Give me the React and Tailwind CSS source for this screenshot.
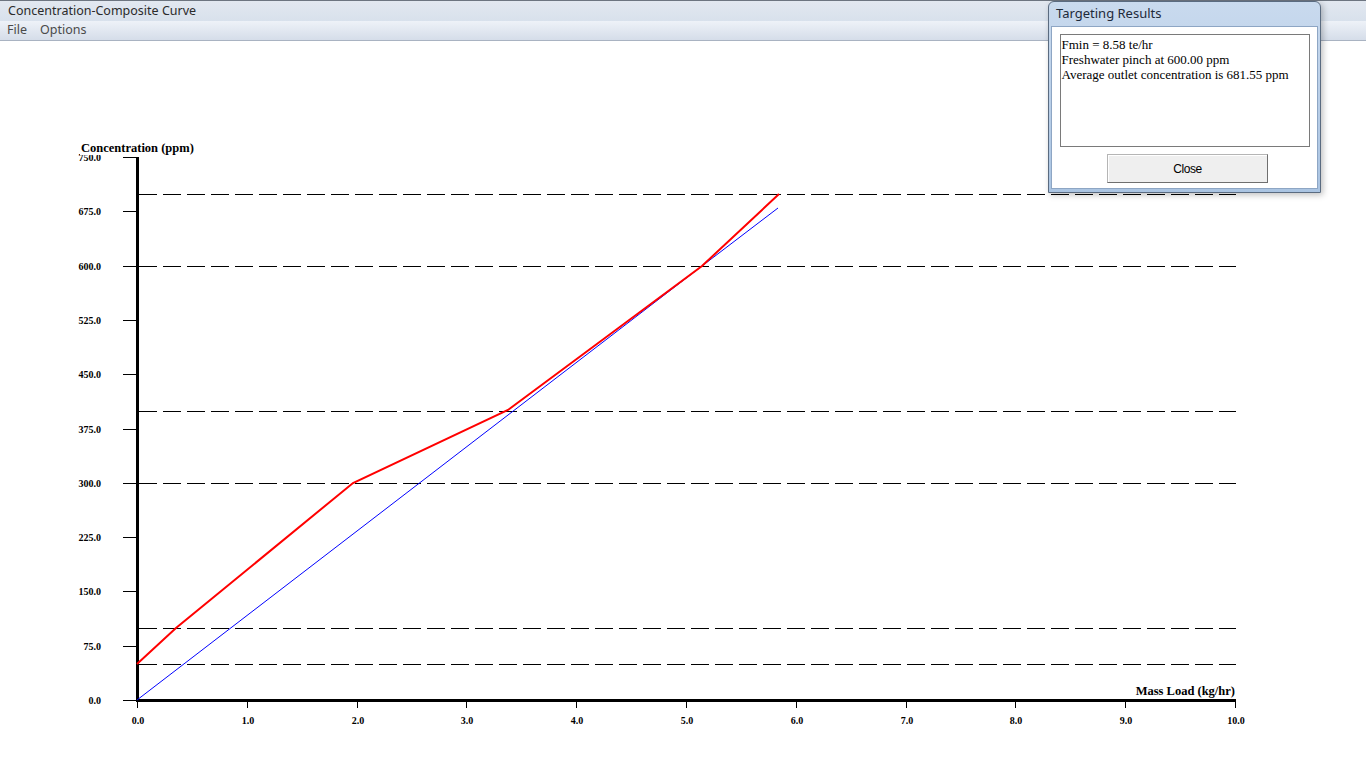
import React from "react";

const X = (v) => 137 + v * 109.8;
const Y = (c) => 700 - c * 0.724;

const yTicks = [0, 75, 150, 225, 300, 375, 450, 525, 600, 675, 750];
const xTicks = [0, 1, 2, 3, 4, 5, 6, 7, 8, 9, 10];
// dashed guide lines (pixel rows)
const guides = [194, 266, 411, 483, 628, 664];

const red = [
  [137, 664],
  [176, 628],
  [353, 483],
  [508, 410],
  [702, 266],
  [779, 194],
];
const blue = [
  [137, 700],
  [702, 266],
  [778, 208],
];

const pts = (arr) => arr.map((p) => p.join(",")).join(" ");

function Chart() {
  return (
    <svg width="1366" height="727" viewBox="0 41 1366 727" className="block font-['Liberation_Serif',serif] font-bold">
      {guides.map((y) => (
        <line key={y} x1="139" x2="1236" y1={y + 0.5} y2={y + 0.5} stroke="#000" strokeWidth="1" strokeDasharray="18 6" shapeRendering="crispEdges" />
      ))}

      {/* axes */}
      <line x1="137.5" x2="137.5" y1="157" y2="701" stroke="#000" strokeWidth="3" shapeRendering="crispEdges" />
      <line x1="136" x2="1236" y1="700" y2="700" stroke="#000" strokeWidth="3" shapeRendering="crispEdges" />

      {yTicks.map((c) => {
        const y = Math.round(Y(c));
        return (
          <g key={c}>
            <line x1="123" x2="137" y1={y + 0.5} y2={y + 0.5} stroke="#000" strokeWidth="1" shapeRendering="crispEdges" />
            <text x="101" y={y + 3.5} textAnchor="end" fontSize="10" fill="#000">
              {c.toFixed(1)}
            </text>
          </g>
        );
      })}

      {xTicks.map((v) => {
        const x = Math.round(X(v));
        return (
          <g key={v}>
            <line x1={x + 0.5} x2={x + 0.5} y1="700" y2="708" stroke="#000" strokeWidth="1" shapeRendering="crispEdges" />
            <text x={x + 1} y="724" textAnchor="middle" fontSize="10" fill="#000">
              {v.toFixed(1)}
            </text>
          </g>
        );
      })}

      {/* axis title sits over the top of the 750.0 label, as in the original */}
      <rect x="80" y="141" width="114" height="14" fill="#fff" />
      <text x="81" y="152" fontSize="12.5" fill="#000">
        Concentration (ppm)
      </text>
      <text x="1235" y="695" textAnchor="end" fontSize="12.5" fill="#000">
        Mass Load (kg/hr)
      </text>

      <polyline points={pts(blue)} fill="none" stroke="#0000ff" strokeWidth="1" />
      <polyline points={pts(red)} fill="none" stroke="#ff0000" strokeWidth="2" />
    </svg>
  );
}

function ResultsDialog() {
  return (
    <div className="absolute left-[1048px] top-[1px] w-[273px] h-[192px] rounded-t-[6px] border border-[#5a6b80] bg-gradient-to-b from-[#c9daee] to-[#aac4e2] shadow-[2px_2px_6px_rgba(0,0,0,0.25)] flex flex-col px-[2px] pb-[3px]">
      <div className="h-[24px] flex items-center pl-[5px] text-[13px] text-[#1e2a3a] font-['Noto_Sans','Open_Sans',sans-serif]">
        Targeting Results
      </div>
      <div className="flex-1 bg-white border border-[#8ea6c4] flex flex-col items-center pt-[7px]">
        <div className="w-[250px] h-[113px] border border-[#7a7a7a] px-[1px] pt-[2px] text-[13px] leading-[15px] text-black font-['Liberation_Serif',serif]">
          <div>Fmin = 8.58 te/hr</div>
          <div>Freshwater pinch at 600.00 ppm</div>
          <div>Average outlet concentration is 681.55 ppm</div>
        </div>
        <button className="mt-[7px] ml-[6px] w-[161px] h-[29px] bg-[#efefef] border border-[#b5b5b5] border-r-[#6f6f6f] border-b-[#6f6f6f] shadow-[inset_1px_1px_0_#fff] text-[12px] tracking-[-0.4px] text-black font-['Liberation_Sans',Arial,sans-serif]">
          Close
        </button>
      </div>
    </div>
  );
}

export default function App() {
  return (
    <div className="relative w-[1366px] h-[768px] overflow-hidden bg-white">
      <div className="h-[21px] border-t border-[#6d7580] bg-gradient-to-b from-[#e2e8f0] to-[#d8e1ec] flex items-center pl-[8px] text-[12.5px] text-[#2b2b2b] font-['Noto_Sans','Open_Sans',sans-serif]">
        Concentration-Composite Curve
      </div>
      <div className="h-[20px] border-b border-[#a9b3c2] bg-gradient-to-b from-[#eef2f8] to-[#d5dde9] flex items-center gap-[13px] pl-[7px] text-[12.5px] text-[#4a4a4a] font-['Noto_Sans','Open_Sans',sans-serif]">
        <span>File</span>
        <span>Options</span>
      </div>
      <Chart />
      <ResultsDialog />
    </div>
  );
}
